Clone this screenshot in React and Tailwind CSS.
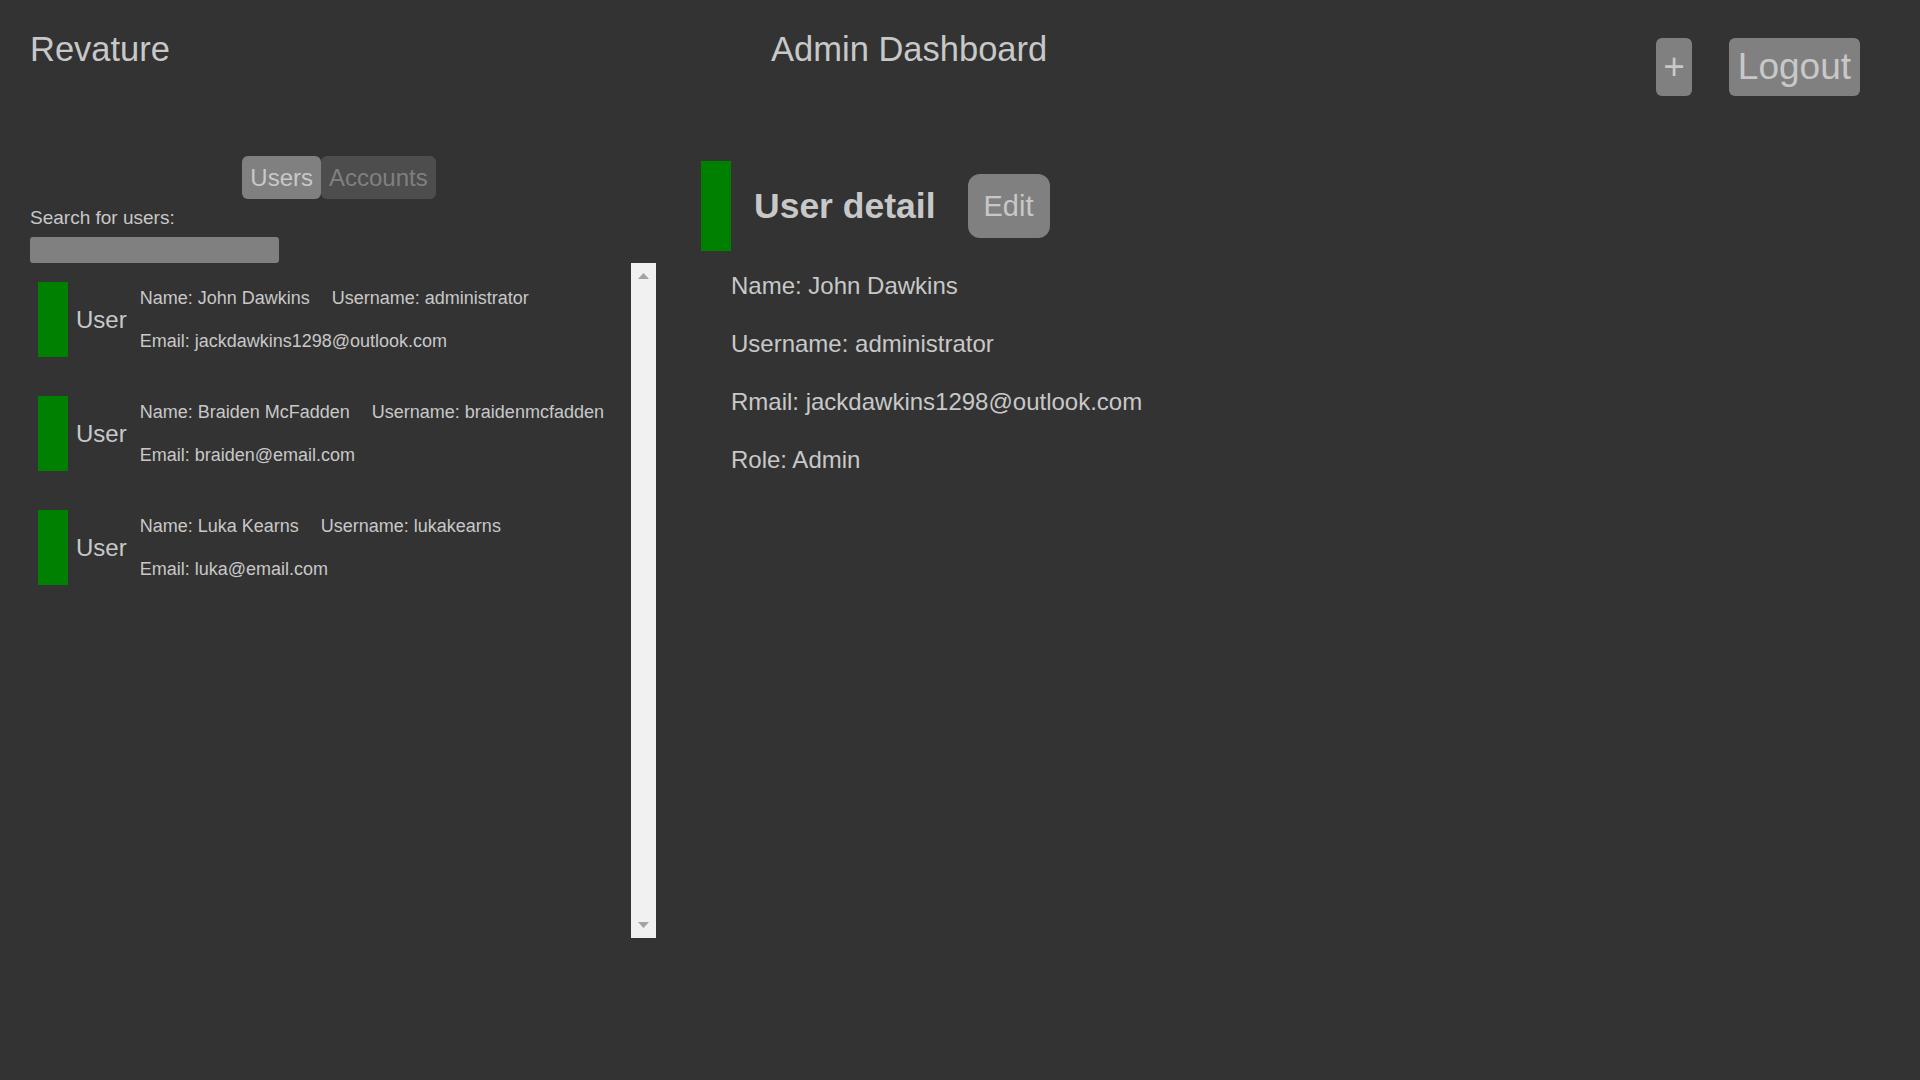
import React, { useState } from "react";

const users = [
  { name: "John Dawkins", username: "administrator", email: "jackdawkins1298@outlook.com" },
  { name: "Braiden McFadden", username: "braidenmcfadden", email: "braiden@email.com" },
  { name: "Luka Kearns", username: "lukakearns", email: "luka@email.com" },
];

function UserRow({ user }) {
  return (
    <div className="flex items-center">
      <div className="w-[30px] h-[75px] bg-[#008000]" />
      <span className="ml-2 text-[24px] leading-[28px]">User</span>
      <div className="ml-[13px] flex flex-col gap-[22px] text-[18px] leading-[21px]">
        <div className="flex gap-[22px]">
          <span>Name: {user.name}</span>
          <span>Username: {user.username}</span>
        </div>
        <span>Email: {user.email}</span>
      </div>
    </div>
  );
}

export default function App() {
  const [tab, setTab] = useState("users");

  return (
    <div className="min-h-screen bg-[#333333] text-[#c8c8c8] font-['Liberation_Sans',Arial,sans-serif]">
      <header className="flex justify-between items-start pt-[30px] pl-[30px] pr-[60px]">
        <h1 className="text-[34.5px] leading-[39px]">Revature</h1>
        <h1 className="text-[34.5px] leading-[39px]">Admin Dashboard</h1>
        <div className="flex gap-[37px] mt-2 pl-[8px]">
          <button className="h-[58px] px-[7px] bg-[#808080] rounded-md text-[37px] leading-[42px]">+</button>
          <button className="h-[58px] px-[9px] bg-[#808080] rounded-md text-[37px] leading-[42px]">Logout</button>
        </div>
      </header>

      <main className="flex gap-[45px] pl-[30px] mt-[60px]">
        <section className="w-[626px] flex flex-col">
          <div className="flex justify-center pr-2">
            <button
              onClick={() => setTab("users")}
              className={`px-2 py-2 text-[24px] leading-[27px] rounded-md ${tab === "users" ? "bg-[#808080] text-[#c8c8c8]" : "bg-[#4d4d4d] text-[#808080]"}`}
            >
              Users
            </button>
            <button
              onClick={() => setTab("accounts")}
              className={`px-2 py-2 text-[24px] leading-[27px] rounded-md ${tab === "accounts" ? "bg-[#808080] text-[#c8c8c8]" : "bg-[#4d4d4d] text-[#808080]"}`}
            >
              Accounts
            </button>
          </div>
          <label className="mt-2 text-[19px] leading-[22px]">Search for users:</label>
          <input className="mt-2 w-[249px] h-[26px] bg-[#808080] rounded-[3px] outline-none px-1 text-[#333333]" />

          <div className="flex h-[675px]">
            <div className="flex-1 flex flex-col gap-[39px] pl-2 pt-[19px]">
              {users.map((u) => (
                <UserRow key={u.username} user={u} />
              ))}
            </div>
            <div className="w-[25px] bg-[#f1f1f1] flex flex-col items-center justify-between py-[10px]">
              <svg width="11" height="6" viewBox="0 0 11 6">
                <polygon points="5.5,0 11,6 0,6" fill="#a3a3a3" />
              </svg>
              <svg width="11" height="6" viewBox="0 0 11 6">
                <polygon points="0,0 11,0 5.5,6" fill="#a3a3a3" />
              </svg>
            </div>
          </div>
        </section>

        <section className="flex flex-col pt-[5px]">
          <div className="flex items-center">
            <div className="w-[30px] h-[90px] bg-[#008000]" />
            <h2 className="ml-[23px] text-[35.5px] leading-[41px] font-bold">User detail</h2>
            <button className="ml-8 px-4 py-4 bg-[#808080] rounded-xl text-[29px] leading-[32px]">Edit</button>
          </div>
          <div className="pl-[30px] mt-[21px] flex flex-col gap-[30px] text-[24px] leading-[28px]">
            <p>Name: John Dawkins</p>
            <p>Username: administrator</p>
            <p>Rmail: jackdawkins1298@outlook.com</p>
            <p>Role: Admin</p>
          </div>
        </section>
      </main>
    </div>
  );
}
